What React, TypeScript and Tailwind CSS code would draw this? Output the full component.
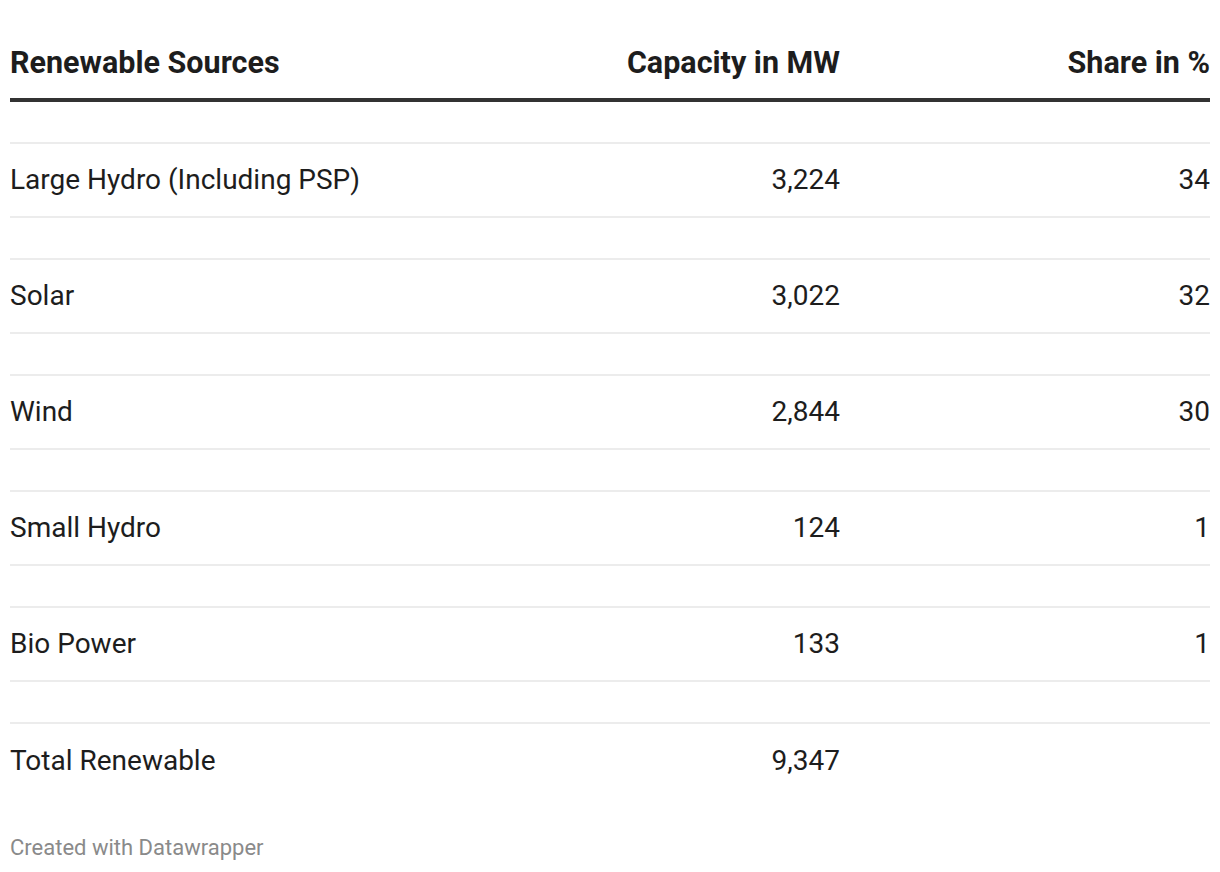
import React from 'react';

const ROWS = [
  { source: 'Large Hydro (Including PSP)', capacity: '3,224', share: '34' },
  { source: 'Solar', capacity: '3,022', share: '32' },
  { source: 'Wind', capacity: '2,844', share: '30' },
  { source: 'Small Hydro', capacity: '124', share: '1' },
  { source: 'Bio Power', capacity: '133', share: '1' },
  { source: 'Total Renewable', capacity: '9,347', share: '' },
];

const COLS = 'grid grid-cols-[530px_300px_370px]';

export default function App() {
  return (
    <div className="min-h-screen bg-white px-[10px] text-[#1d1d1d]" style={{ fontFamily: 'Roboto, "Liberation Sans", sans-serif' }}>
      {/* Header */}
      <div className={`${COLS} items-center pt-[48px] pb-[20px] text-[30.5px] leading-[30px] font-bold border-b-4 border-[#333333]`}>
        <div>Renewable Sources</div>
        <div className="text-right">Capacity in MW</div>
        <div className="text-right">Share in %</div>
      </div>

      {/* Body */}
      {ROWS.map((row, i) => (
        <React.Fragment key={row.source}>
          <div className="h-[42px] border-b-2 border-[#ececec]" />
          <div
            className={`${COLS} items-center h-[74px] text-[28px] leading-[30px] ${
              i < ROWS.length - 1 ? 'border-b-2 border-[#ececec]' : ''
            }`}
          >
            <div>{row.source}</div>
            <div className="text-right">{row.capacity}</div>
            <div className="text-right">{row.share}</div>
          </div>
        </React.Fragment>
      ))}

      {/* Footer */}
      <div className="pt-[38px] text-[22px] leading-[24px] text-[#8a8a8a]">Created with Datawrapper</div>
    </div>
  );
}
